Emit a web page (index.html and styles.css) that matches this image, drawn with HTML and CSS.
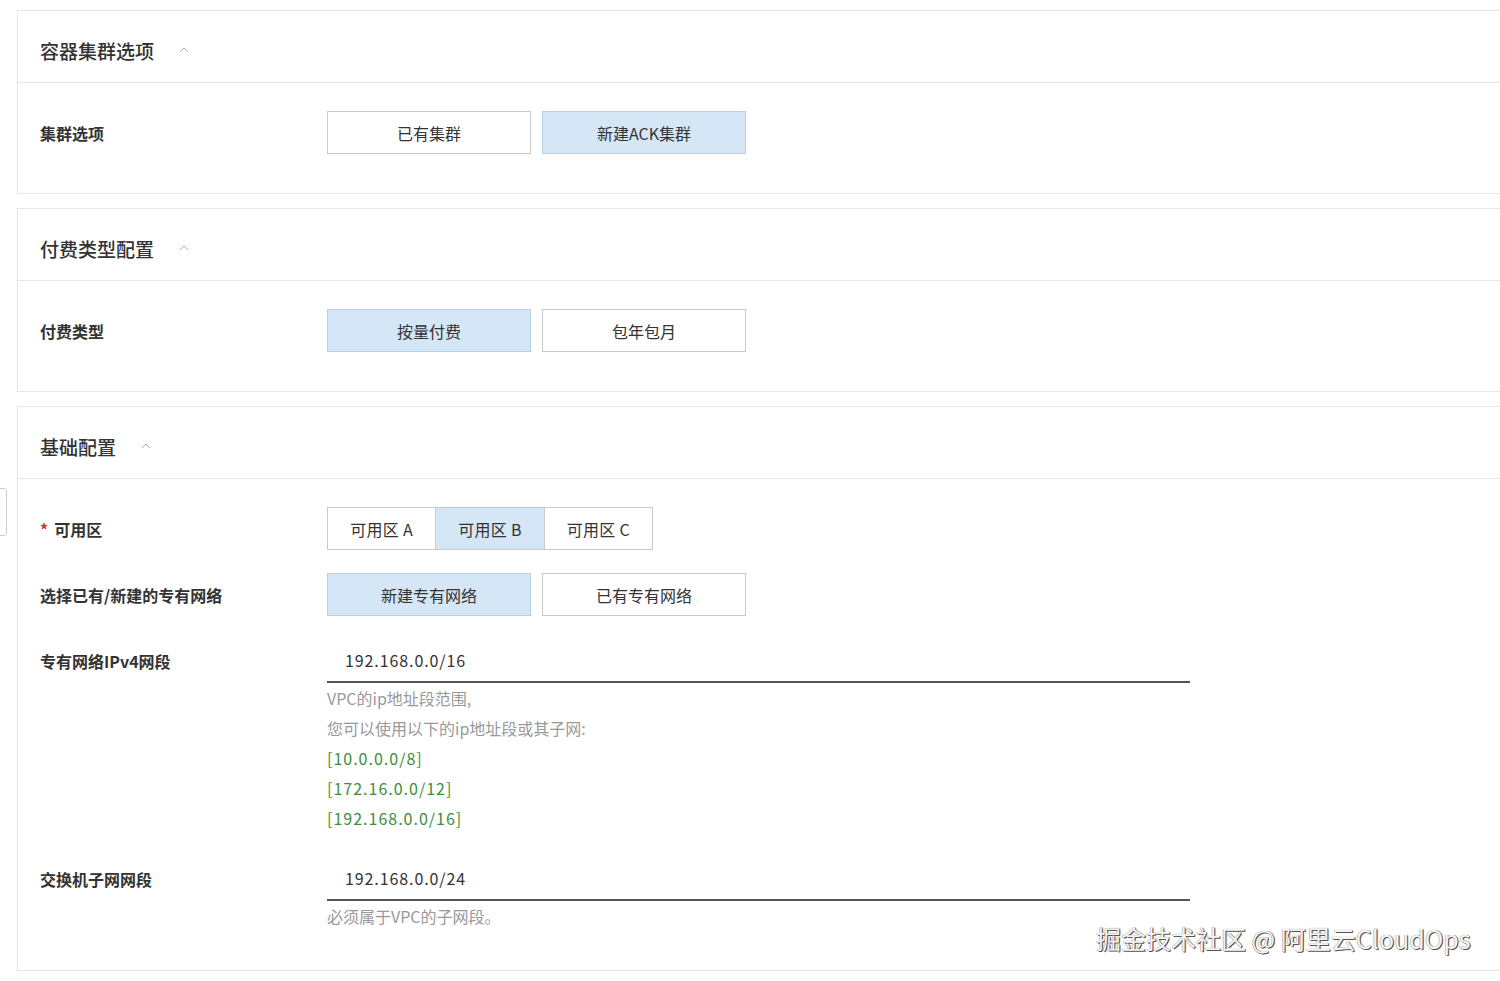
FILE: index.html
```html
<!DOCTYPE html>
<html lang="zh-CN">
<head>
<meta charset="utf-8">
<title>配置</title>
<link rel="stylesheet" href="styles.css">
</head>
<body>
<div class="side-tab"></div>
<main class="page">
  <section class="card">
    <header class="card-head">
      <h2 class="card-title">容器集群选项</h2>
      <svg class="caret" viewBox="0 0 10 6" width="10" height="6"><polyline points="1,5 5,1 9,5" fill="none" stroke="#aaa" stroke-width="1"/></svg>
    </header>
    <div class="card-body">
      <div class="row">
        <div class="label">集群选项</div>
        <div class="control">
          <div class="btn-pair">
            <button class="opt">已有集群</button>
            <button class="opt active">新建ACK集群</button>
          </div>
        </div>
      </div>
    </div>
  </section>

  <section class="card">
    <header class="card-head">
      <h2 class="card-title">付费类型配置</h2>
      <svg class="caret" viewBox="0 0 10 6" width="10" height="6"><polyline points="1,5 5,1 9,5" fill="none" stroke="#aaa" stroke-width="1"/></svg>
    </header>
    <div class="card-body">
      <div class="row">
        <div class="label">付费类型</div>
        <div class="control">
          <div class="btn-pair">
            <button class="opt active">按量付费</button>
            <button class="opt">包年包月</button>
          </div>
        </div>
      </div>
    </div>
  </section>

  <section class="card card-last">
    <header class="card-head">
      <h2 class="card-title">基础配置</h2>
      <svg class="caret" viewBox="0 0 10 6" width="10" height="6"><polyline points="1,5 5,1 9,5" fill="none" stroke="#aaa" stroke-width="1"/></svg>
    </header>
    <div class="card-body">
      <div class="row">
        <div class="label"><span class="req">*</span>可用区</div>
        <div class="control">
          <div class="seg">
            <button class="seg-item">可用区 A</button>
            <button class="seg-item active">可用区 B</button>
            <button class="seg-item">可用区 C</button>
          </div>
        </div>
      </div>
      <div class="row">
        <div class="label">选择已有/新建的专有网络</div>
        <div class="control">
          <div class="btn-pair">
            <button class="opt active">新建专有网络</button>
            <button class="opt">已有专有网络</button>
          </div>
        </div>
      </div>
      <div class="row row-input">
        <div class="label">专有网络IPv4网段</div>
        <div class="control">
          <div class="input">192.168.0.0/16</div>
          <div class="help">
            <p>VPC的ip地址段范围,</p>
            <p>您可以使用以下的ip地址段或其子网:</p>
            <p class="ok">[10.0.0.0/8]</p>
            <p class="ok">[172.16.0.0/12]</p>
            <p class="ok">[192.168.0.0/16]</p>
          </div>
        </div>
      </div>
      <div class="row row-input">
        <div class="label">交换机子网网段</div>
        <div class="control">
          <div class="input">192.168.0.0/24</div>
          <div class="help">
            <p>必须属于VPC的子网段。</p>
          </div>
        </div>
      </div>
    </div>
  </section>
</main>
<div class="watermark">掘金技术社区 @ 阿里云CloudOps</div>
</body>
</html>
```

FILE: styles.css
```css
* { box-sizing: border-box; }
html, body { margin: 0; padding: 0; }
body {
  width: 1500px;
  height: 981px;
  overflow: hidden;
  background: #fff;
  font-family: "Noto Sans CJK SC", "Noto Sans", sans-serif;
  color: #333;
  position: relative;
}
.page {
  padding: 10px 0 0 17px;
  display: flex;
  flex-direction: column;
  gap: 14px;
}
.card {
  width: 1520px;
  border: 1px solid #e6e6e6;
  border-right: none;
  background: #fff;
}
.card-head {
  height: 72px;
  display: flex;
  align-items: center;
  padding-left: 22px;
  padding-top: 8px;
  border-bottom: 1px solid #e6e6e6;
}
.card-title {
  margin: 0;
  font-size: 19px;
  font-weight: 500;
  color: #333;
  line-height: 1;
}
.caret {
  margin-left: 25px;
  margin-top: -2px;
}
.card-body {
  padding: 28px 0 39px 22px;
  display: flex;
  flex-direction: column;
  gap: 23px;
}
.card-last .card-body { padding-bottom: 39px; }
.row {
  display: flex;
  align-items: flex-start;
}
.row-input + .row-input { margin-top: 1px; }
.label {
  width: 287px;
  flex: none;
  height: 43px;
  display: flex;
  align-items: center;
  font-size: 16px;
  font-weight: 700;
  color: #333;
}
.req {
  color: #d9302c;
  margin-right: 6px;
  font-weight: 700;
}
.control { flex: none; }
.btn-pair {
  display: flex;
  gap: 11px;
}
.opt {
  width: 204px;
  height: 43px;
  border: 1px solid #c9c9c9;
  background: #fff;
  font-family: inherit;
  font-size: 16px;
  color: #333;
  padding: 0;
  cursor: pointer;
}
.opt.active {
  background: #d5e6f6;
  border-color: #b9d2ea;
}
.seg {
  display: flex;
  border: 1px solid #c9c9c9;
  width: 326px;
  height: 43px;
}
.seg-item {
  flex: 1;
  border: none;
  border-left: 1px solid #c9c9c9;
  background: #fff;
  font-family: inherit;
  font-size: 16px;
  color: #333;
  padding: 0;
  letter-spacing: 0.3px;
}
.seg-item:first-child { border-left: none; }
.seg-item.active {
  background: #d5e6f6;
  border-left-color: #b9d2ea;
}
.input {
  width: 863px;
  height: 44px;
  border-bottom: 2px solid #555;
  padding-left: 18px;
  display: flex;
  align-items: center;
  font-size: 16px;
  letter-spacing: 0.9px;
  color: #333;
}
.help p {
  margin: 0;
  font-size: 16px;
  line-height: 30px;
  color: #999;
}
.help p.ok {
  color: #3b8f3b;
  letter-spacing: 1px;
}
.side-tab {
  position: absolute;
  left: -10px;
  top: 488px;
  width: 17px;
  height: 48px;
  border: 1px solid #cfcfcf;
  border-radius: 0 3px 3px 0;
  background: #fff;
}
.watermark {
  position: absolute;
  left: 1096px;
  top: 920px;
  font-family: "Noto Sans CJK SC", "Noto Sans", sans-serif;
  font-size: 25px;
  line-height: 36px;
  color: #f4f4f4;
  white-space: nowrap;
  text-shadow: 1px 1px 0 #555, -0.5px -0.5px 0 #999, 1px 0 1px #777;
}
```
